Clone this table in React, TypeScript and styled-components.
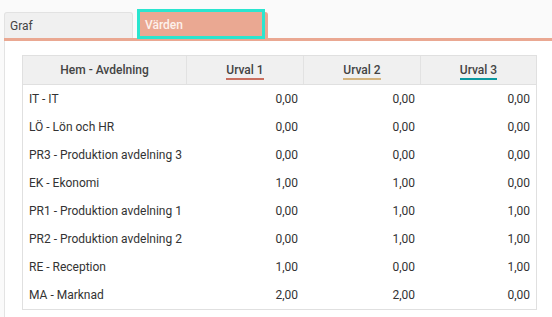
import React from "react";
import styled, { createGlobalStyle } from "styled-components";

const GlobalStyle = createGlobalStyle`
  body {
    margin: 0;
    background: #fafafa;
    font-family: Roboto, "Liberation Sans", Arial, sans-serif;
  }
`;

interface Row {
  name: string;
  values: string[];
}

const rows: Row[] = [
  { name: "IT - IT", values: ["0,00", "0,00", "0,00"] },
  { name: "LÖ - Lön och HR", values: ["0,00", "0,00", "0,00"] },
  { name: "PR3 - Produktion avdelning 3", values: ["0,00", "0,00", "0,00"] },
  { name: "EK - Ekonomi", values: ["1,00", "1,00", "0,00"] },
  { name: "PR1 - Produktion avdelning 1", values: ["0,00", "1,00", "1,00"] },
  { name: "PR2 - Produktion avdelning 2", values: ["0,00", "1,00", "1,00"] },
  { name: "RE - Reception", values: ["1,00", "0,00", "1,00"] },
  { name: "MA - Marknad", values: ["2,00", "2,00", "0,00"] },
];

const urval = [
  { label: "Urval 1", color: "#c96f5f" },
  { label: "Urval 2", color: "#d4b47e" },
  { label: "Urval 3", color: "#0a98a0" },
];

const Page = styled.div`
  padding-left: 4px;
  min-height: 317px;
  display: flex;
  flex-direction: column;
`;

const TabBar = styled.div`
  display: flex;
  align-items: flex-end;
  gap: 4px;
  height: 38px;
  border-bottom: 3px solid #eaa892;
`;

const Tab = styled.div<{ active?: boolean }>`
  width: ${(p) => (p.active ? "131px" : "129px")};
  height: 26px;
  box-sizing: border-box;
  border-radius: 3px 3px 0 0;
  background: ${(p) => (p.active ? "#eaa892" : "#f0f0f0")};
  border: ${(p) => (p.active ? "none" : "1px solid #e2e2e2")};
  border-bottom: none;
  font-size: 12px;
  color: ${(p) => (p.active ? "#fdf1ec" : "#444")};
  font-weight: ${(p) => (p.active ? 500 : 400)};
  display: flex;
  align-items: flex-start;
  padding-left: ${(p) => (p.active ? "3px" : "5px")};
`;

const TabLink = styled.span<{ focused?: boolean }>`
  display: flex;
  align-items: center;
  width: 122px;
  height: 24px;
  padding-top: 1px;
  box-sizing: border-box;
  padding-left: ${(p) => (p.focused ? "5px" : "0")};
  outline: ${(p) => (p.focused ? "3px solid #2ae5cf" : "none")};
`;

const Panel = styled.div`
  flex: 1;
  background: #fff;
  border-left: 1px solid #e3e3e3;
  padding: 14px 15px 8px 17px;
`;

const Table = styled.div`
  border: 1px solid #e0e0e0;
  font-size: 12px;
  color: #333;
`;

const Grid = styled.div`
  display: grid;
  grid-template-columns: 164px 117px 117px 1fr;
`;

const HeaderRow = styled(Grid)`
  height: 28px;
  background: #f0f0f0;
  border-bottom: 1px solid #e0e0e0;
`;

const HeaderCell = styled.div`
  display: flex;
  align-items: center;
  justify-content: center;
  font-weight: 500;
  color: #444;
  border-right: 1px solid #e2e2e2;

  &:last-child {
    border-right: none;
  }
`;

const Underlined = styled.span<{ color: string }>`
  padding-bottom: 1px;
  margin-top: 3px;
  border-bottom: 2px solid ${(p) => p.color};
`;

const BodyRow = styled(Grid)`
  height: 28px;
  align-items: center;
`;

const NameCell = styled.div`
  padding-left: 6px;
`;

const ValueCell = styled.div`
  text-align: right;
  padding-right: 6px;
`;

export default function App() {
  return (
    <>
      <GlobalStyle />
      <Page>
        <TabBar>
          <Tab>
            <TabLink>Graf</TabLink>
          </Tab>
          <Tab active>
            <TabLink focused>Värden</TabLink>
          </Tab>
        </TabBar>
        <Panel>
          <Table>
            <HeaderRow>
              <HeaderCell>Hem - Avdelning</HeaderCell>
              {urval.map((u) => (
                <HeaderCell key={u.label}>
                  <Underlined color={u.color}>{u.label}</Underlined>
                </HeaderCell>
              ))}
            </HeaderRow>
            {rows.map((r) => (
              <BodyRow key={r.name}>
                <NameCell>{r.name}</NameCell>
                {r.values.map((v, i) => (
                  <ValueCell key={i}>{v}</ValueCell>
                ))}
              </BodyRow>
            ))}
          </Table>
        </Panel>
      </Page>
    </>
  );
}
